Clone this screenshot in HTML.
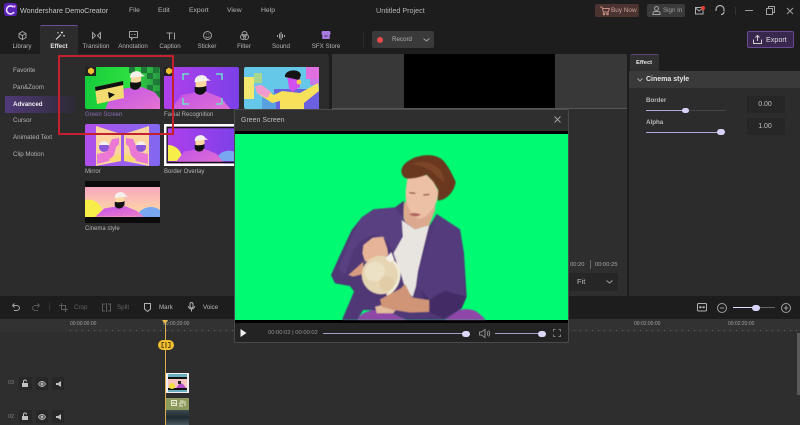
<!DOCTYPE html>
<html><head><meta charset="utf-8"><title>DemoCreator</title>
<style>
html,body{margin:0;padding:0;width:800px;height:425px;overflow:hidden;background:#1d1d1d}
body{font-family:"Liberation Sans",sans-serif;color:#b4b4b4;font-size:6.2px}
#root{position:absolute;left:0;top:0;width:800px;height:425px;overflow:hidden;background:#1d1d1d;filter:blur(.25px)}
.a{position:absolute}
.t{position:absolute;white-space:nowrap;line-height:10px}
.c{transform:translateX(-50%)}
svg{position:absolute;overflow:visible}
svg.th{overflow:hidden}
.ic{fill:none;stroke:#a0a0a0;stroke-width:1}
.m{font-size:6.8px}
</style></head><body>
<div id="root">
<svg width="0" height="0" style="position:absolute"><defs>
<linearGradient id="pk" x1="0" y1="0" x2="1" y2="1"><stop offset="0" stop-color="#c050e8"/><stop offset="1" stop-color="#f080c8"/></linearGradient>
<linearGradient id="sun" x1="0" y1="0" x2="0" y2="1"><stop offset="0" stop-color="#f8a8c0"/><stop offset="1" stop-color="#fde0a0"/></linearGradient>
<linearGradient id="pur" x1="0" y1="0" x2="1" y2="0"><stop offset="0" stop-color="#b040ec"/><stop offset="1" stop-color="#7c40e8"/></linearGradient>
<linearGradient id="mir" x1="0" y1="0" x2="1" y2="0"><stop offset="0" stop-color="#b050ea"/><stop offset="1" stop-color="#8268f0"/></linearGradient>
<linearGradient id="gr" x1="0" y1="0" x2="1" y2="0"><stop offset="0" stop-color="#16cc3c"/><stop offset=".6" stop-color="#2ee040"/><stop offset="1" stop-color="#2a9a44"/></linearGradient>
<g id="man">
<path d="M-42 60L-33 37-21 22-4 19H7L22 25 32 37 42 60Z" fill="url(#pk)"/>
<rect x="-5" y="13" width="10" height="7" fill="#f7cf8f"/>
<path d="M-6 5h12v9c0 2-3 5-6 5s-6-3-6-5z" fill="#fbd9a0"/>
<path d="M-7 13c3 1 10 1 13-1v5c-2 4-5 5-7 5s-6-1-6-5z" fill="#111"/>
<path d="M-7 7c0-8 12-9 14-3l4 2-18 2z" fill="#f4f0ec"/>
</g>
<g id="mw">
<path d="M11 2l25 8v27L11 42z" fill="#fbd4a0"/>
<path d="M27 15l7-1v6l-3 3-2 8-5 6-12 3v-10l9-2 3-6z" fill="#ea78d4"/>
<path d="M24 35l10-5 2 1v6l-8 1z" fill="#f8dc70"/>
<circle cx="19" cy="23" r="5" fill="#8a58d8"/>
<path d="M14 21c1-5 9-5 10 0z" fill="#f4f0ec"/>
</g>
</defs></svg>

<!-- Top bar -->
<svg style="left:4px;top:3px" width="14" height="14" viewBox="0 0 14 14"><rect width="13" height="13" rx="3" fill="#5a22b8"/><path d="M9.500 4.200A4 4 0 1 0 10 9" fill="none" stroke="#eadcff" stroke-width="1.600"/><circle cx="10.500" cy="3.400" r="1.200" fill="#f0a0e0"/></svg>
<div class="t" style="left:20px;top:6px;font-size:7.2px;color:#c4c4c4">Wondershare DemoCreator</div>
<div class="t m" style="left:129px;top:6px">File</div>
<div class="t m" style="left:158px;top:6px">Edit</div>
<div class="t m" style="left:189px;top:6px">Export</div>
<div class="t m" style="left:227px;top:6px">View</div>
<div class="t m" style="left:261px;top:6px">Help</div>
<div class="t" style="left:376px;top:6px;font-size:7.200px">Untitled Project</div>

<div class="a" style="left:595px;top:4px;width:44px;height:13px;background:#4a3330;border-radius:2px"></div>
<svg class="ic" style="left:600px;top:6px;stroke:#c98f85" width="10" height="10" viewBox="0 0 10 10"><path d="M0 1h2l1.300 5h5l1-3.500H3"/><circle cx="4" cy="8" r=".8"/><circle cx="7.500" cy="8" r=".8"/></svg>
<div class="t" style="left:611px;top:6px;font-size:6.400px;color:#cca298">Buy Now</div>
<div class="a" style="left:647px;top:4px;width:38px;height:13px;background:#3a3a3a;border-radius:2px"></div>
<svg class="ic" style="left:652px;top:6px" width="9" height="9" viewBox="0 0 9 9"><circle cx="4.500" cy="2.500" r="2"/><path d="M1 8.500V7c0-1 1-1.500 2-1.500h3c1 0 2 .5 2 1.500v1.500z"/></svg>
<div class="t" style="left:663px;top:6px;font-size:6.200px;color:#a0a0a0">Sign In</div>
<svg class="ic" style="left:695px;top:7px;stroke:#b0b0b0" width="10" height="8" viewBox="0 0 10 8"><rect x=".5" y=".5" width="7.500" height="6.500"/><path d="M.5 1l3.700 3 3.800-3"/></svg>
<div class="a" style="left:701px;top:6px;width:4px;height:4px;background:#e8403c;border-radius:50%"></div>
<svg class="ic" style="left:715px;top:5px;stroke:#b0b0b0;stroke-width:1.200" width="10" height="11" viewBox="0 0 10 11"><path d="M1 6V4.500a4 4 0 0 1 8 0V6M6 9.500c2 0 3-1 3-3"/></svg>
<div class="a" style="left:735px;top:7px;width:1px;height:8px;background:#333"></div>
<div class="a" style="left:745px;top:10px;width:8px;height:1px;background:#999"></div>
<svg class="ic" style="left:766px;top:6px" width="9" height="9" viewBox="0 0 9 9"><rect x=".5" y="2.500" width="6" height="6"/><path d="M2.500 2.500V.5h6v6H6.500"/></svg>
<svg class="ic" style="left:786px;top:7px" width="8" height="8" viewBox="0 0 8 8"><path d="M1 1l6 6M7 1L1 7"/></svg>

<!-- Tabs -->
<div class="a" style="left:40px;top:25px;width:38px;height:29px;background:#2c2c2c;border-top:1px solid #6d4c98;box-sizing:border-box;border-radius:2px 2px 0 0"></div>
<svg class="ic" style="left:18px;top:31px" width="9" height="9" viewBox="0 0 9 9"><path d="M4.500.5l3.500 2v4l-3.500 2-3.500-2v-4zM1 2.500l3.500 2 3.500-2M4.500 4.500v4"/></svg>
<svg class="ic" style="left:55px;top:31px;stroke:#e0e0e0" width="10" height="9" viewBox="0 0 10 9"><path d="M1 8.500L6 3.500M7 .5v2M6 1.500h2M9 4v1.500M3 1v1.500M8.200 4.800H9.800"/></svg>
<svg class="ic" style="left:92px;top:32px" width="9" height="7" viewBox="0 0 9 7"><path d="M.5.500l3 3-3 3zM8.500.5l-3 3 3 3z"/></svg>
<svg class="ic" style="left:129px;top:31px" width="9" height="9" viewBox="0 0 9 9"><path d="M.5.500h8v6H4L2.500 8.500v-2h-2zM2.500 3.500h1M5 3.500h1.500"/></svg>
<svg class="ic" style="left:166px;top:32px" width="10" height="8" viewBox="0 0 10 8"><path d="M.5 1h6M3.500 1v6.500M8.500.5v7"/></svg>
<svg class="ic" style="left:203px;top:31px" width="9" height="9" viewBox="0 0 9 9"><circle cx="4.500" cy="4.500" r="4"/><path d="M2.500 5.500c1 1.300 3 1.300 4 0M3 3h.6M5.500 3h.6"/></svg>
<svg class="ic" style="left:240px;top:31px" width="9" height="9" viewBox="0 0 9 9"><circle cx="4.500" cy="3" r="2.500"/><circle cx="3" cy="6" r="2.500"/><circle cx="6" cy="6" r="2.500"/></svg>
<svg class="ic" style="left:277px;top:32px" width="8" height="8" viewBox="0 0 8 8"><path d="M.5 3v2M2.500 1.500v5M4 0v8M5.500 2v4M7.500 3v2"/></svg>
<svg style="left:321px;top:30px" width="10" height="10" viewBox="0 0 10 10"><path d="M1 1h8l.7 3-1 .7V9H1.300V4.700l-1-.7z" fill="#a77be0"/><rect x="3.500" y="5.500" width="3" height="1" fill="#3a2a50"/></svg>
<div class="t c" style="left:22px;top:42px">Library</div>
<div class="t c" style="left:59px;top:42px;color:#e4e4e4;font-weight:bold">Effect</div>
<div class="t c" style="left:96px;top:42px">Transition</div>
<div class="t c" style="left:133px;top:42px">Annotation</div>
<div class="t c" style="left:170px;top:42px">Caption</div>
<div class="t c" style="left:207px;top:42px">Sticker</div>
<div class="t c" style="left:244px;top:42px">Filter</div>
<div class="t c" style="left:281px;top:42px">Sound</div>
<div class="t c" style="left:326px;top:42px">SFX Store</div>

<div class="a" style="left:363px;top:31px;width:1px;height:17px;background:#2c2c2c"></div>
<div class="a" style="left:372px;top:31px;width:62px;height:17px;background:#3a3a3a;border-radius:2px"></div>
<div class="a" style="left:377px;top:37px;width:6px;height:6px;background:#ec4a4a;border-radius:50%"></div>
<div class="t" style="left:392px;top:35px;color:#b0b0b0">Record</div>
<svg class="ic" style="left:423px;top:38px" width="7" height="4" viewBox="0 0 7 4"><path d="M.5.500l3 2.500 3-2.500"/></svg>

<div class="a" style="left:747px;top:31px;width:47px;height:17px;background:#38284e;border:1px solid #6a4b93;box-sizing:border-box;border-radius:2px"></div>
<svg class="ic" style="left:753px;top:35px;stroke:#cfcfcf" width="9" height="9" viewBox="0 0 9 9"><path d="M4.500 6V.5M2.500 2.500l2-2 2 2M.5 4.500v4h8v-4"/></svg>
<div class="t" style="left:766px;top:35px;font-size:7.200px;color:#dedede">Export</div>

<!-- Left panel -->
<div class="a" style="left:0;top:54px;width:329px;height:242px;background:#2c2c2c;border-radius:0 3px 3px 0"></div>
<div class="a" style="left:5px;top:96px;width:70px;height:17px;background:linear-gradient(90deg,#4f3a78,#2e2a35)"></div>
<div class="t" style="left:13px;top:66px">Favorite</div>
<div class="t" style="left:13px;top:83px">Pan&amp;Zoom</div>
<div class="t" style="left:13px;top:100px;color:#f0f0f0;font-weight:bold">Advanced</div>
<div class="t" style="left:13px;top:116px">Cursor</div>
<div class="t" style="left:13px;top:133px">Animated Text</div>
<div class="t" style="left:13px;top:150px">Clip Motion</div>

<!-- Thumbs -->
<svg class="th" style="left:85px;top:67px" width="75" height="42" viewBox="0 0 75 42"><rect width="75" height="42" rx="2" fill="url(#gr)"/><path d="M44 0h6v6h-6zM56 0h6v6h-6zM68 0h6v6h-6zM50 6h6v6h-6zM62 6h6v6h-6zM62 18h6v6h-6zM68 12h7v6h-7zM68 24h7v6h-7zM62 30h6v6h-6z" fill="#1f7a3a"/><g transform="translate(51 4) scale(.85)"><use href="#man"/></g><path d="M10 20L38 14 39 31 12 37Z" fill="#f2dc70"/><path d="M10 20L38 14 38.400 18 10.500 24Z" fill="#101010"/><path d="M23 25l7 2.500-6 4z" fill="#111"/><rect width="11" height="9" fill="#222"/><path d="M3 2.500l3-2 3 2v3l-3 2-3-2z" fill="#f0c030"/></svg>
<svg class="th" style="left:164px;top:67px" width="75" height="42" viewBox="0 0 75 42"><rect width="75" height="42" rx="2" fill="url(#pur)"/><g transform="translate(37 8) scale(.9)"><use href="#man"/></g><path d="M19 13V7h6M58 13V7h-6M19 31v6h6M58 31v6h-6" fill="none" stroke="#6ee0c8" stroke-width="1.500"/><rect width="10" height="9" fill="#222"/><path d="M2 2.500l3-2 3 2v3l-3 2-3-2z" fill="#f0c030"/></svg>
<svg class="th" style="left:244px;top:67px" width="75" height="42" viewBox="0 0 75 42"><rect width="75" height="42" rx="2" fill="#66c8e8"/><rect x="0" y="10" width="10" height="22" fill="#f2e870"/><rect x="10" y="6" width="8" height="10" fill="#a8d890"/><rect x="62" y="0" width="13" height="12" fill="#e070e0"/><rect x="66" y="12" width="9" height="6" fill="#c878e8"/><rect x="30" y="22" width="45" height="20" fill="#6a60e0"/><rect x="18" y="26" width="14" height="16" fill="#58a0e0"/><path d="M11 20l5-2 14 10 8-4 18 2 18-10 1 8-15 12v6H36V34l-8 2-15-10z" fill="#f7e05a"/><path d="M11 19l7-1 9 7-4 6-10-5z" fill="#f09ad0"/><path d="M43 8h13v12l-8 5-3-4z" fill="#d050f0"/><path d="M41 10c-1-8 15-9 16-2l-2 5-9-2z" fill="#151515"/><circle cx="55" cy="15" r="2.500" fill="#f6d050"/></svg>
<div class="t" style="left:85px;top:110px;color:#8d6fb5;font-size:6px">Green Screen</div>
<div class="t" style="left:164px;top:110px;font-size:6px">Facial Recognition</div>

<svg class="th" style="left:85px;top:124px" width="75" height="42" viewBox="0 0 75 42"><rect width="75" height="42" rx="2" fill="url(#mir)"/><use href="#mw"/><g transform="translate(75) scale(-1 1)"><use href="#mw"/></g></svg>
<svg class="th" style="left:164px;top:124px" width="75" height="42" viewBox="0 0 75 42"><rect width="75" height="42" fill="url(#pur)"/><path d="M4 21a14 14 0 0 1 14 16H4z" fill="#f7ee4a"/><path d="M52 37a13 12 0 0 1 19-9v9z" fill="#77a8f0"/><g transform="translate(36 11) scale(.75)"><use href="#man"/></g><rect x="3" y="3.500" width="69" height="35" fill="none" stroke="#111" stroke-width="1.500"/><rect x="1.250" y="1.250" width="72.500" height="39.500" fill="none" stroke="#fff" stroke-width="2.500"/></svg>
<div class="t" style="left:85px;top:167px;font-size:6px">Mirror</div>
<div class="t" style="left:164px;top:167px;font-size:6px">Border Overlay</div>

<svg class="th" style="left:85px;top:181px" width="75" height="42" viewBox="0 0 75 42"><rect width="75" height="42" rx="1" fill="#0b0b0b"/><rect y="6" width="75" height="30" fill="url(#sun)"/><path d="M0 19a14 14 0 0 1 17 17H0z" fill="#f7ee4a"/><path d="M52 36a14 12 0 0 1 23-7v7z" fill="#77a8f0"/><g transform="translate(35 11) scale(.75)"><path d="M-33 33L-21 22-4 19H7L22 25 32 33Z" fill="url(#pk)"/><rect x="-5" y="13" width="10" height="7" fill="#f7cf8f"/><path d="M-6 5h12v9c0 2-3 5-6 5s-6-3-6-5z" fill="#fbd9a0"/><path d="M-7 13c3 1 10 1 13-1v5c-2 4-5 5-7 5s-6-1-6-5z" fill="#111"/><path d="M-7 7c0-8 12-9 14-3l4 2-18 2z" fill="#f4f0ec"/></g></svg>
<div class="t" style="left:85px;top:224px;font-size:6px">Cinema style</div>

<!-- Preview -->
<div class="a" style="left:332px;top:54px;width:295px;height:242px;background:#2e2e2e;border-radius:3px 3px 0 0"></div>
<div class="a" style="left:332px;top:54px;width:295px;height:54px;background:#383838"></div>
<div class="a" style="left:332px;top:108px;width:295px;height:1px;background:#56565e"></div>
<div class="a" style="left:404px;top:54px;width:151px;height:54px;background:#000"></div>
<div class="t" style="left:570px;top:260px;color:#a8a8a8;font-size:5.800px">00:20</div>
<div class="a" style="left:590px;top:260px;width:1px;height:9px;background:#666"></div>
<div class="t" style="left:595px;top:260px;color:#a8a8a8;font-size:5.800px">00:00:25</div>
<div class="a" style="left:569px;top:273px;width:49px;height:18px;background:#262626;border-radius:2px"></div>
<div class="t" style="left:577px;top:277px;font-size:7.500px;color:#b8b8b8">Fit</div>
<svg class="ic" style="left:606px;top:280px" width="7" height="4" viewBox="0 0 7 4"><path d="M.5.500l3 2.500 3-2.500"/></svg>

<!-- Right panel -->
<div class="a" style="left:629px;top:71px;width:171px;height:225px;background:#2c2c2c"></div>
<div class="a" style="left:630px;top:54px;width:29px;height:17px;background:#303030;border-top:1px solid #5a4478;box-sizing:border-box;border-radius:2px 2px 0 0"></div>
<div class="t" style="left:636px;top:58px;color:#e8e8e8;font-weight:bold;font-size:5.800px">Effect</div>
<div class="a" style="left:629px;top:71px;width:171px;height:17px;background:#3a3a3a"></div>
<svg class="ic" style="left:637px;top:78px" width="6" height="4" viewBox="0 0 6 4"><path d="M.5.500l2.500 2.500 2.500-2.500"/></svg>
<div class="t" style="left:646px;top:75px;font-size:7px;color:#e6e6e6;font-weight:bold">Cinema style</div>
<div class="t" style="left:646px;top:96px;color:#b8b8b8;font-weight:bold">Border</div>
<div class="a" style="left:646px;top:110px;width:40px;height:1px;background:#b4aadc"></div>
<div class="a" style="left:686px;top:110px;width:40px;height:1px;background:#444"></div>
<div class="a" style="left:682px;top:108px;width:7px;height:5px;background:#d6d2f8;border-radius:3px"></div>
<div class="a" style="left:747px;top:96px;width:38px;height:17px;background:#262626"></div>
<div class="t c" style="left:765px;top:100px;font-size:7px;color:#c0c0c0">0.00</div>
<div class="t" style="left:646px;top:118px;color:#b8b8b8;font-weight:bold">Alpha</div>
<div class="a" style="left:646px;top:132px;width:76px;height:1px;background:#b4aadc"></div>
<div class="a" style="left:717px;top:129px;width:8px;height:6px;background:#d6d2f8;border-radius:3px"></div>
<div class="a" style="left:747px;top:118px;width:38px;height:17px;background:#262626"></div>
<div class="t c" style="left:765px;top:122px;font-size:7px;color:#c0c0c0">1.00</div>

<!-- Toolbar -->
<svg class="ic" style="left:12px;top:303px;stroke:#a0a0a0" width="8" height="8" viewBox="0 0 8 8"><path d="M2.500.5L.5 2.500l2 2M.5 2.500h4a3 2.500 0 0 1 0 5H2"/></svg>
<svg class="ic" style="left:32px;top:303px;stroke:#555" width="8" height="8" viewBox="0 0 8 8"><path d="M5.500.5l2 2-2 2M7.500 2.500h-4a3 2.500 0 0 0 0 5H6"/></svg>
<div class="a" style="left:49px;top:303px;width:1px;height:8px;background:#333"></div>
<svg class="ic" style="left:59px;top:303px;stroke:#5c5c5c" width="9" height="9" viewBox="0 0 9 9"><path d="M2.500 0v6.500H9M0 2.500h6.500V9"/></svg>
<div class="t" style="left:74px;top:303px;color:#626262">Crop</div>
<svg class="ic" style="left:102px;top:303px;stroke:#5c5c5c" width="9" height="9" viewBox="0 0 9 9"><path d="M3 1H.5v7H3M6 1h2.500v7H6M4.500 0v9"/></svg>
<div class="t" style="left:117px;top:303px;color:#626262">Split</div>
<svg class="ic" style="left:144px;top:303px;stroke:#b0b0b0" width="7" height="9" viewBox="0 0 7 9"><path d="M.5.500h6v5.500L3.500 8.500.5 6z"/></svg>
<div class="t" style="left:159px;top:303px;color:#b8b8b8">Mark</div>
<svg class="ic" style="left:188px;top:302px;stroke:#b0b0b0" width="7" height="10" viewBox="0 0 7 10"><rect x="2" y=".5" width="3" height="5.500" rx="1.500"/><path d="M.5 4c0 4 6 4 6 0M3.500 7v2.500"/></svg>
<div class="t" style="left:203px;top:303px;color:#b8b8b8">Voice</div>

<svg class="ic" style="left:697px;top:303px;stroke:#b0b0b0" width="10" height="9" viewBox="0 0 10 9"><rect x=".5" y=".5" width="9" height="7.500" rx="1"/><path d="M2.500 4.200h5M3.500 3.200l-1 1 1 1M6.500 3.200l1 1-1 1"/></svg>
<svg class="ic" style="left:717px;top:303px;stroke:#a0a0a0" width="10" height="10" viewBox="0 0 10 10"><circle cx="5" cy="5" r="4.500"/><path d="M2.800 5h4.400"/></svg>
<div class="a" style="left:733px;top:307px;width:23px;height:1px;background:#e4e0ff"></div>
<div class="a" style="left:756px;top:307px;width:19px;height:1px;background:#666"></div>
<div class="a" style="left:752px;top:305px;width:8px;height:6px;background:#d8d4fa;border-radius:3px"></div>
<svg class="ic" style="left:781px;top:303px;stroke:#a0a0a0" width="10" height="10" viewBox="0 0 10 10"><circle cx="5" cy="5" r="4.500"/><path d="M2.800 5h4.400M5 2.800v4.400"/></svg>

<!-- Timeline -->
<div class="a" style="left:0;top:319px;width:800px;height:106px;background:#2e2e2e"></div>
<div class="a" style="left:0;top:319px;width:800px;height:13px;background:#323232"></div>
<div class="a" style="left:70px;top:330px;width:730px;height:1px;background:repeating-linear-gradient(90deg,#666 0 1px,transparent 1px 6px)"></div>
<div class="t" style="left:70px;top:319px;font-size:5px;color:#a0a0a0">00:00:00:00</div>
<div class="t" style="left:163px;top:319px;font-size:5px;color:#a0a0a0">00:00:20:00</div>
<div class="t" style="left:634px;top:319px;font-size:5px;color:#a0a0a0">00:02:00:00</div>
<div class="t" style="left:728px;top:319px;font-size:5px;color:#a0a0a0">00:02:20:00</div>
<div class="a" style="left:797px;top:333px;width:3px;height:62px;background:#5a5a5a"></div>

<div class="t" style="left:8px;top:378px;font-size:5.500px;color:#808080">03</div>
<div class="t" style="left:8px;top:412px;font-size:5.500px;color:#808080">02</div>
<div class="a" style="left:19px;top:377px;width:13px;height:13px;background:#272727"></div>
<div class="a" style="left:36px;top:377px;width:12px;height:13px;background:#272727"></div>
<div class="a" style="left:52px;top:377px;width:12px;height:13px;background:#272727"></div>
<div class="a" style="left:19px;top:410px;width:13px;height:13px;background:#272727"></div>
<div class="a" style="left:36px;top:410px;width:12px;height:13px;background:#272727"></div>
<div class="a" style="left:52px;top:410px;width:12px;height:13px;background:#272727"></div>
<svg style="left:22px;top:380px" width="7" height="7" viewBox="0 0 7 7"><rect y="3" width="6" height="4" fill="#c0c0c0"/><path d="M1.500 3V1.500a1.500 1.500 0 0 1 3 0" fill="none" stroke="#c0c0c0"/></svg>
<svg style="left:22px;top:413px" width="7" height="7" viewBox="0 0 7 7"><rect y="3" width="6" height="4" fill="#c0c0c0"/><path d="M1.500 3V1.500a1.500 1.500 0 0 1 3 0" fill="none" stroke="#c0c0c0"/></svg>
<svg class="ic" style="left:38px;top:381px;stroke:#b8b8b8" width="8" height="6" viewBox="0 0 8 6"><path d="M.5 3c2-3.300 5-3.300 7 0-2 3.300-5 3.300-7 0z"/><circle cx="4" cy="3" r="1" fill="#b8b8b8"/></svg>
<svg class="ic" style="left:38px;top:414px;stroke:#b8b8b8" width="8" height="6" viewBox="0 0 8 6"><path d="M.5 3c2-3.300 5-3.300 7 0-2 3.300-5 3.300-7 0z"/><circle cx="4" cy="3" r="1" fill="#b8b8b8"/></svg>
<svg style="left:56px;top:381px" width="5" height="6" viewBox="0 0 5 6"><path d="M0 2h2l3-2v6L2 4H0z" fill="#c0c0c0"/></svg>
<svg style="left:56px;top:414px" width="5" height="6" viewBox="0 0 5 6"><path d="M0 2h2l3-2v6L2 4H0z" fill="#c0c0c0"/></svg>

<!-- Clips -->
<svg style="left:166px;top:373px" width="23" height="20" viewBox="0 0 23 20"><rect width="23" height="20" fill="#f0f0f0"/><rect x="2" y="1" width="19" height="18" fill="#6ab0c0"/><rect x="2" y="4" width="19" height="2" fill="#111"/><rect x="2" y="6" width="19" height="9" fill="#f8c8c0"/><rect x="2" y="15" width="19" height="2" fill="#111"/><circle cx="6" cy="13" r="3" fill="#f0e040"/><path d="M10 15l4-5 3 1 3 4z" fill="#b050c8"/><rect x="12" y="8" width="3" height="3" fill="#222"/></svg>
<div class="a" style="left:165px;top:398px;width:24px;height:12px;background:#8d9a5e"></div>
<div class="a" style="left:165px;top:410px;width:24px;height:15px;background:linear-gradient(180deg,#3c4a52,#1e2a2e 50%,#4b5a60)"></div>
<svg class="ic" style="left:171px;top:400px;stroke:#e8e8d0" width="15" height="7" viewBox="0 0 15 7"><rect x=".5" y=".5" width="5" height="5"/><path d="M.5 4l2-1.500 3 2M9 1h3v2H9v3h3M14 1v5"/></svg>

<!-- Playhead -->
<div class="a" style="left:164.500px;top:323px;width:1.500px;height:102px;background:#dcae4a"></div>
<div class="a" style="left:162px;top:320px;width:0;height:0;border-left:3.500px solid transparent;border-right:3.500px solid transparent;border-top:4px solid #e8bb4a"></div>
<div class="a" style="left:158px;top:340px;width:16px;height:10px;background:#f0c030;border-radius:5px"></div>
<svg class="ic" style="left:161px;top:342px;stroke:#5c4410" width="10" height="6" viewBox="0 0 10 6"><path d="M3 .5H1v5h2M7 .5h2v5H7M5 0v6"/></svg>

<!-- Dialog -->
<div class="a" style="left:234px;top:109px;width:335px;height:234px;background:#232323;border:1px solid #4a4a4a;box-sizing:border-box;border-radius:2px"></div>
<div class="a" style="left:235px;top:110px;width:333px;height:21px;background:#2f2f2f"></div>
<div class="t" style="left:241px;top:116px;font-size:7px;color:#bcbcbc">Green Screen</div>
<svg class="ic" style="left:554px;top:116px" width="7" height="7" viewBox="0 0 7 7"><path d="M.5.500l6 6M6.500.5l-6 6"/></svg>
<div class="a" style="left:235px;top:131px;width:333px;height:192px;background:#000"></div>
<div class="a" style="left:235px;top:134px;width:333px;height:186px;background:#00fb72"></div>

<svg class="th" style="left:330px;top:140px;filter:blur(.4px)" width="200" height="180" viewBox="0 0 600 540">
<!-- pants -->
<path d="M80 542C95 512 130 505 170 512L235 542ZM335 542C365 510 410 498 440 515 452 525 462 532 468 542Z" fill="#8f47a8"/>
<!-- jacket body -->
<path d="M35 542L72 455 60 438 15 430 3 405 30 345 65 270 95 232 130 208 195 202 222 182 220 235 255 268 300 255 320 222 390 268 402 340 410 470 395 505 340 542 235 542 170 512 100 510 80 542Z" fill="#4f3875"/>
<path d="M130 208L95 232 60 300 25 385 45 405 70 330 95 300 130 285 170 300 190 340 215 290 220 230 195 202Z" fill="#594080"/>
<path d="M320 222L300 290 265 400 262 445 300 478 340 452 402 468 402 340 390 268Z" fill="#543c7c"/>
<path d="M270 445L298 480 345 452 410 470 395 505 340 535 300 518Z" fill="#432c66"/>
<!-- tee -->
<path d="M215 240L255 268 298 255 282 320 264 395 258 440 248 472 225 445 212 400 190 340 218 290Z" fill="#e8e5e0"/>
<!-- neck -->
<path d="M222 190C218 225 222 240 225 246L255 268 298 255 315 212 318 170 240 170Z" fill="#dca98e"/>
<!-- face -->
<path d="M232 115C227 150 223 172 233 196 240 216 252 236 272 236 295 230 312 205 320 185L326 155 310 125 290 105 260 110Z" fill="#ecc0a4"/>
<path d="M238 222C248 230 262 232 272 224 262 218 248 218 238 222Z" fill="#b06462"/>
<path d="M238 158l18 2M280 165l18-2" stroke="#7a4a32" stroke-width="3" fill="none"/>
<!-- hair -->
<path d="M214 92C218 68 240 60 255 52 285 42 325 40 345 68 362 90 368 108 377 125 375 152 350 182 323 182L325 150 310 125 290 104C270 112 250 116 232 116 220 114 214 104 214 92Z" fill="#6a381f"/>
<path d="M245 72C275 58 315 68 335 95L345 130 320 108C300 85 270 75 245 72Z" fill="#7c4527"/>
<!-- forearm & hand -->
<path d="M55 405L100 365 100 402 70 410Z" fill="#d89c80"/>
<path d="M97 340L100 315 128 293 160 290 172 325 175 345 140 362 105 365Z" fill="#e8b498"/>
<!-- globe -->
<circle cx="153" cy="405" r="58" fill="#e6d5b2"/>
<circle cx="135" cy="395" r="30" fill="#efe3c9" opacity=".8"/>
<circle cx="170" cy="430" r="22" fill="#dcc8a0" opacity=".6"/>
<path d="M170 350C215 370 225 430 170 466" fill="none" stroke="#f2ecd8" stroke-width="8"/>
<path d="M166 356l18-20 9 22-12 10z" fill="#f4f0e8"/>
<!-- stand & lower hand -->
<path d="M135 500L175 490 205 500 190 520 140 520Z" fill="#e2bc9c"/>
<path d="M150 478L212 445 225 432 245 472 298 480 298 516 240 518 190 510 155 500Z" fill="#cf9576"/>
</svg>

<svg style="left:240px;top:329px" width="7" height="8" viewBox="0 0 7 8"><path d="M.5 0l6 4-6 4z" fill="#f0f0f0"/></svg>
<div class="t" style="left:268px;top:328px;color:#949494;font-size:5.800px">00:00:02 | 00:00:02</div>
<div class="a" style="left:323px;top:333px;width:143px;height:1px;background:#a8a0cc"></div>
<div class="a" style="left:462px;top:331px;width:8px;height:6px;background:#dcd8fa;border-radius:3px"></div>
<svg class="ic" style="left:479px;top:329px;stroke:#8c8c8c" width="11" height="9" viewBox="0 0 11 9"><path d="M.5 3h2L6 .5v8L2.500 6h-2zM8 2.500c1 1 1 3 0 4M9.500 1.500c1.500 1.500 1.500 4.500 0 6"/></svg>
<div class="a" style="left:495px;top:333px;width:46px;height:1px;background:#a8a0cc"></div>
<div class="a" style="left:538px;top:331px;width:8px;height:6px;background:#dcd8fa;border-radius:3px"></div>
<svg class="ic" style="left:553px;top:329px;stroke:#7c7c7c" width="8" height="8" viewBox="0 0 8 8"><path d="M.5 2.500V.5h2M5.500.5h2v2M7.500 5.500v2h-2M2.500 7.500h-2v-2"/></svg>

<!-- Red annotation -->
<div class="a" style="left:58px;top:55px;width:116px;height:80px;border:2px solid #c4202f;box-sizing:border-box"></div>
</div>
</body></html>
